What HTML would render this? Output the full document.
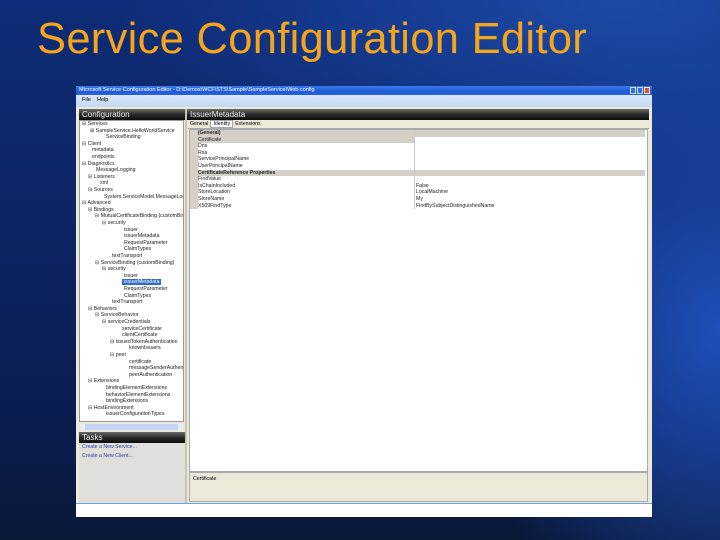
<!DOCTYPE html>
<html><head><meta charset="utf-8"><style>
*{margin:0;padding:0;box-sizing:border-box}
body{width:720px;height:540px;overflow:hidden;position:relative;font-family:"Liberation Sans",sans-serif;
background:radial-gradient(ellipse 260px 320px at 720px 330px,#1f4fb8 0%,rgba(31,79,184,0) 100%),
radial-gradient(ellipse 500px 200px at 620px 0px,#1c4aa8 0%,rgba(28,74,168,0) 100%),
linear-gradient(180deg,#0f2c78 0%,#0d2463 45%,#0a1c4d 80%,#0a1838 100%);}
.t{position:absolute;left:37px;top:15px;font-size:43.5px;color:#f4a51b;letter-spacing:0.3px;white-space:nowrap}
.a{position:absolute}
.win{left:76px;top:86px;width:576px;height:431px;background:#ece9d8}
.tb{left:76px;top:86px;width:576px;height:9px;background:linear-gradient(#3d7ae8,#1f5cd6 60%,#2a62d8);color:#fff;font-size:5.5px;line-height:9px;padding-left:3px;white-space:nowrap}
.menu{left:76px;top:95px;width:576px;height:12px;background:linear-gradient(#d8e6f8,#c4d8f2);font-size:5.5px;line-height:10px;padding-left:6px}
.hdr{background:linear-gradient(#6a6a6a,#2a2a2a 50%,#0c0c0c);color:#eee;font-size:8px;line-height:11px;padding-left:3px;height:11px}
.tree{left:79px;top:120px;width:105px;height:302px;background:#fff;border:1px solid #999;overflow:hidden}
.tree div{position:absolute;font-size:5.2px;line-height:6px;white-space:nowrap;color:#222}
.grid div{position:absolute;font-size:5.2px;line-height:6px;white-space:nowrap;color:#222}
</style></head><body>
<div class="t">Service Configuration Editor</div>
<div class="a win"></div>
<div class="a tb">Microsoft Service Configuration Editor - D:\Demos\WCF\STS\Sample\SampleService\Web.config</div>
<div class="a" style="left:630px;top:87px;width:6px;height:7px;background:#2f6ee8;border:1px solid #cde"></div>
<div class="a" style="left:637px;top:87px;width:6px;height:7px;background:#2f6ee8;border:1px solid #cde"></div>
<div class="a" style="left:644px;top:87px;width:6px;height:7px;background:#d9542f;border:1px solid #fdd"></div>
<div class="a menu">File &nbsp;&nbsp; Help</div>
<div class="a" style="left:76px;top:107px;width:576px;height:2px;background:#ece9d8"></div>
<div class="a hdr" style="left:79px;top:109px;width:106px">Configuration</div>
<div class="a hdr" style="left:187px;top:109px;width:462px">IssuerMetadata</div>
<div class="a" style="left:185px;top:109px;width:2px;height:394px;background:#c8c4b4"></div>
<div class="a tree">
<div style="top:0;left:2px">⊟ Services</div>
<div style="top:6.6px;left:10px">⊞ SampleService.HelloWorldService</div>
<div style="top:13.2px;left:26px">ServiceBinding</div>
<div style="top:19.8px;left:2px">⊟ Client</div>
<div style="top:26.4px;left:12px">metadata</div>
<div style="top:33px;left:12px">endpoints</div>
<div style="top:39.6px;left:2px">⊟ Diagnostics</div>
<div style="top:46.2px;left:16px">MessageLogging</div>
<div style="top:52.8px;left:8px">⊟ Listeners</div>
<div style="top:59.4px;left:20px">xml</div>
<div style="top:66px;left:8px">⊟ Sources</div>
<div style="top:72.6px;left:24px">System.ServiceModel.MessageLogging</div>
<div style="top:79.2px;left:2px">⊟ Advanced</div>
<div style="top:85.8px;left:8px">⊟ Bindings</div>
<div style="top:92.4px;left:15px">⊟ MutualCertificateBinding (customBinding)</div>
<div style="top:99px;left:22px">⊟ security</div>
<div style="top:105.6px;left:44px">issuer</div>
<div style="top:112.2px;left:44px">issuerMetadata</div>
<div style="top:118.8px;left:44px">RequestParameter</div>
<div style="top:125.4px;left:44px">ClaimTypes</div>
<div style="top:132px;left:32px">textTransport</div>
<div style="top:138.6px;left:15px">⊟ ServiceBinding (customBinding)</div>
<div style="top:145.2px;left:22px">⊟ security</div>
<div style="top:151.8px;left:44px">issuer</div>
<div style="top:158.4px;left:42px;background:#316ac5;color:#fff;padding:0 2px">issuerMetadata</div>
<div style="top:165px;left:44px">RequestParameter</div>
<div style="top:171.6px;left:44px">ClaimTypes</div>
<div style="top:178.2px;left:32px">textTransport</div>
<div style="top:184.8px;left:8px">⊟ Behaviors</div>
<div style="top:191.4px;left:15px">⊟ ServiceBehavior</div>
<div style="top:198px;left:22px">⊟ serviceCredentials</div>
<div style="top:204.6px;left:42px">serviceCertificate</div>
<div style="top:211.2px;left:42px">clientCertificate</div>
<div style="top:217.8px;left:30px">⊟ issuedTokenAuthentication</div>
<div style="top:224.4px;left:49px">knownIssuers</div>
<div style="top:231px;left:30px">⊟ peer</div>
<div style="top:237.6px;left:49px">certificate</div>
<div style="top:244.2px;left:49px">messageSenderAuthentication</div>
<div style="top:250.8px;left:49px">peerAuthentication</div>
<div style="top:257.4px;left:8px">⊟ Extensions</div>
<div style="top:264px;left:26px">bindingElementExtensions</div>
<div style="top:270.6px;left:26px">behaviorElementExtensions</div>
<div style="top:277.2px;left:26px">bindingExtensions</div>
<div style="top:283.8px;left:8px">⊟ HostEnvironment</div>
<div style="top:290.4px;left:26px">issuerConfigurationTypes</div>
</div>
<div class="a" style="left:80px;top:424px;width:103px;height:6px;background:#c4d4f4"></div>
<div class="a" style="left:80px;top:424px;width:5px;height:6px;background:#e8eef8"></div>
<div class="a" style="left:178px;top:424px;width:5px;height:6px;background:#e8eef8"></div>
<div class="a hdr" style="left:79px;top:432px;width:106px">Tasks</div>
<div class="a" style="left:79px;top:443px;width:106px;height:60px;background:#e0dfdc;font-size:5.2px;color:#2b3ea8;line-height:9px;padding-left:3px">Create a New Service...<br>Create a New Client...</div>
<div class="a" style="left:188px;top:120px;width:461px;height:9px;background:#ece9d8;border-bottom:1px solid #aaa;font-size:5.2px;line-height:9px"><span style="padding:0 2px">General</span><span style="background:#fff;padding:0 2px;border:1px solid #aaa">Identity</span><span style="padding:0 2px">Extensions</span></div>
<div class="a" style="left:189px;top:129px;width:459px;height:343px;background:#fff;border:1px solid #aaa"></div>
<div class="a grid" style="left:190px;top:130px;width:456px;height:80px">
<div style="top:0;left:0;width:455px;height:6.6px;background:#d4d0c8"></div>
<div style="top:0;left:2px;font-weight:bold">⊟ (General)</div>
<div style="top:6.6px;left:0;width:224px;height:6.6px;background:#d4d0c8"></div>
<div style="top:6.6px;left:8px">Certificate</div>
<div style="top:13.2px;left:8px">Dns</div>
<div style="top:19.8px;left:8px">Rsa</div>
<div style="top:26.4px;left:8px">ServicePrincipalName</div>
<div style="top:33px;left:8px">UserPrincipalName</div>
<div style="top:39.6px;left:0;width:455px;height:6.6px;background:#d4d0c8"></div>
<div style="top:39.6px;left:2px;font-weight:bold">⊟ CertificateReference Properties</div>
<div style="top:46.2px;left:8px">FindValue</div>
<div style="top:52.8px;left:8px">IsChainIncluded</div>
<div style="top:59.4px;left:8px">StoreLocation</div>
<div style="top:66px;left:8px">StoreName</div>
<div style="top:72.6px;left:8px">X509FindType</div>
<div style="top:52.8px;left:226px">False</div>
<div style="top:59.4px;left:226px">LocalMachine</div>
<div style="top:66px;left:226px">My</div>
<div style="top:72.6px;left:226px">FindBySubjectDistinguishedName</div>
<div style="top:0;left:0;width:8px;height:79px;background:#d4d0c8"></div>
<div style="top:0;left:224px;width:1px;height:79px;background:#ccc"></div>
</div>
<div class="a" style="left:189px;top:472px;width:459px;height:30px;background:#ece9d8;border:1px solid #aaa;font-size:5.2px;padding:3px 3px">Certificate</div>
<div class="a" style="left:76px;top:503px;width:576px;height:14px;background:#fff;border-top:1px solid #6aa6e0"></div>
</body></html>
